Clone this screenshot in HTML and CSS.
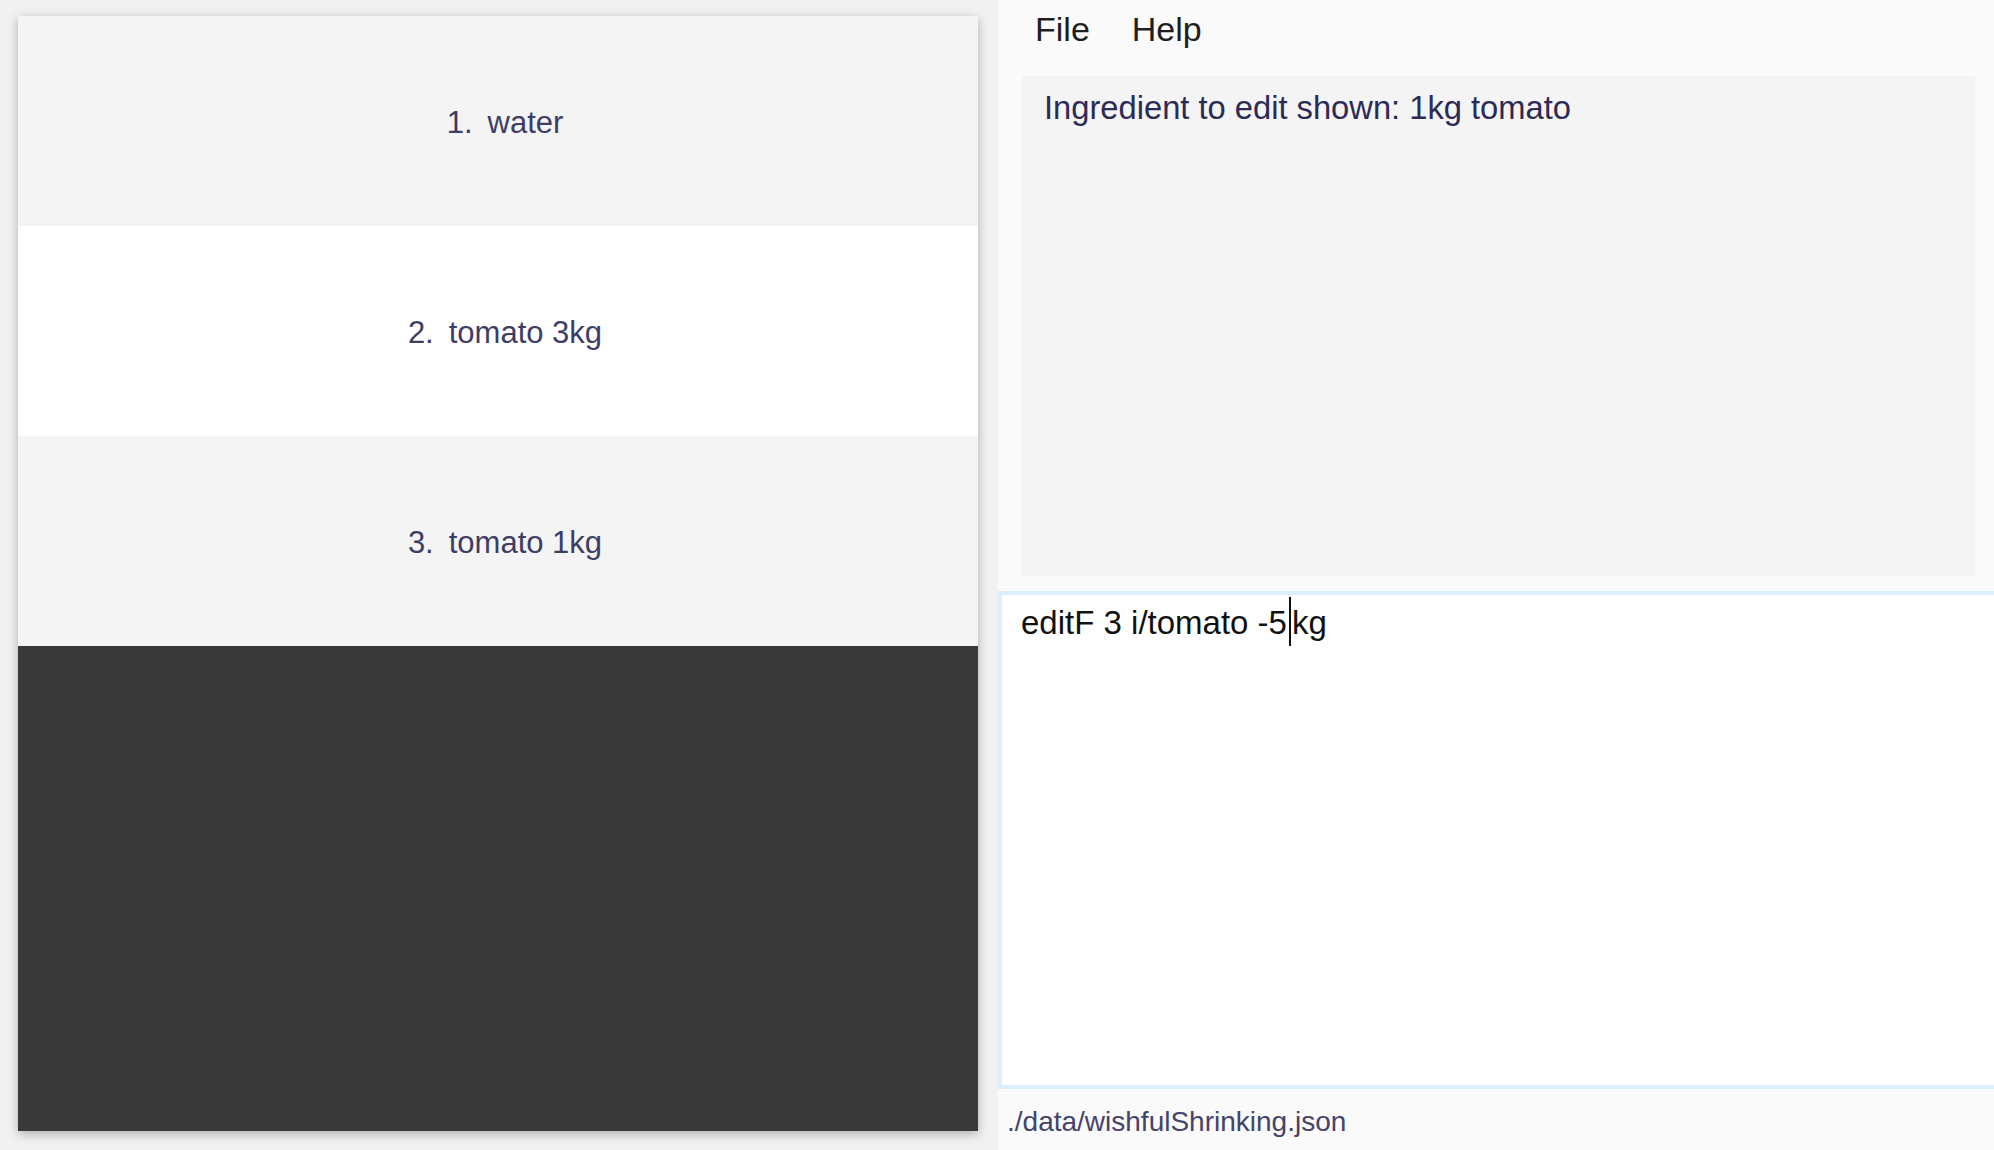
FILE: index.html
```html
<!DOCTYPE html>
<html>
<head>
<meta charset="utf-8">
<title>Wishful Shrinking</title>
<link rel="stylesheet" href="styles.css">
</head>
<body>
<div class="app">
  <section class="left">
    <div class="list">
      <div class="row odd"><span class="idx">1.</span><span class="name">water</span></div>
      <div class="row even"><span class="idx">2.</span><span class="name">tomato 3kg</span></div>
      <div class="row odd"><span class="idx">3.</span><span class="name">tomato 1kg</span></div>
      <div class="filler"></div>
    </div>
  </section>
  <section class="right">
    <nav class="menubar">
      <span class="menu-item">File</span>
      <span class="menu-item">Help</span>
    </nav>
    <div class="result">Ingredient to edit shown: 1kg tomato</div>
    <div class="command"><span class="cmd-text">editF 3 i/tomato -5<span class="caret"></span>kg</span></div>
    <footer class="status">./data/wishfulShrinking.json</footer>
  </section>
</div>
</body>
</html>
```

FILE: styles.css
```css
html, body {
  margin: 0;
  padding: 0;
  width: 1994px;
  height: 1150px;
  overflow: hidden;
  background: #f1f1f1;
  font-family: "Liberation Sans", Arial, sans-serif;
}

.app {
  display: flex;
  width: 1994px;
  height: 1150px;
}

.left {
  width: 998px;
  box-sizing: border-box;
  padding: 16px 20px 19px 18px;
  background: #f1f1f1;
}

.list {
  height: 100%;
  display: flex;
  flex-direction: column;
  box-shadow: 0 3px 10px rgba(0, 0, 0, 0.28);
}

.row {
  height: 210px;
  flex: none;
  box-sizing: border-box;
  display: flex;
  align-items: center;
  justify-content: center;
  gap: 15px;
  font-size: 31px;
  color: #3d3d66;
  padding: 3px 0 0 14px;
}

.row.odd { background: #f4f4f4; }
.row.even { background: #ffffff; }

.filler {
  flex: 1;
  background: #393939;
}

.right {
  flex: 1;
  display: flex;
  flex-direction: column;
  background: #fafafa;
}

.menubar {
  height: 60px;
  display: flex;
  align-items: center;
  padding-left: 16px;
  padding-bottom: 2px;
  box-sizing: border-box;
}

.menu-item {
  font-size: 34px;
  color: #1f1f1f;
  padding: 0 21px;
}

.result {
  margin: 16px 19px 0 24px;
  height: 500px;
  box-sizing: border-box;
  background: #f4f4f4;
  padding: 14px 22px;
  font-size: 32.7px;
  line-height: 36px;
  color: #2c2b55;
}

.command {
  margin-top: 15px;
  height: 498px;
  box-sizing: border-box;
  background: #ffffff;
  border: 4px solid #ddeef8;
  border-right: none;
  padding: 2px 19px;
  font-size: 33px;
  line-height: 40px;
  color: #111111;
}

.caret {
  display: inline-block;
  width: 2px;
  height: 49px;
  background: #111111;
  vertical-align: -12px;
  margin: 0 1px 0 2px;
}

.status {
  flex: 1;
  padding: 15px 10px 0 9px;
  font-size: 28px;
  line-height: 36px;
  color: #44446a;
}
```
